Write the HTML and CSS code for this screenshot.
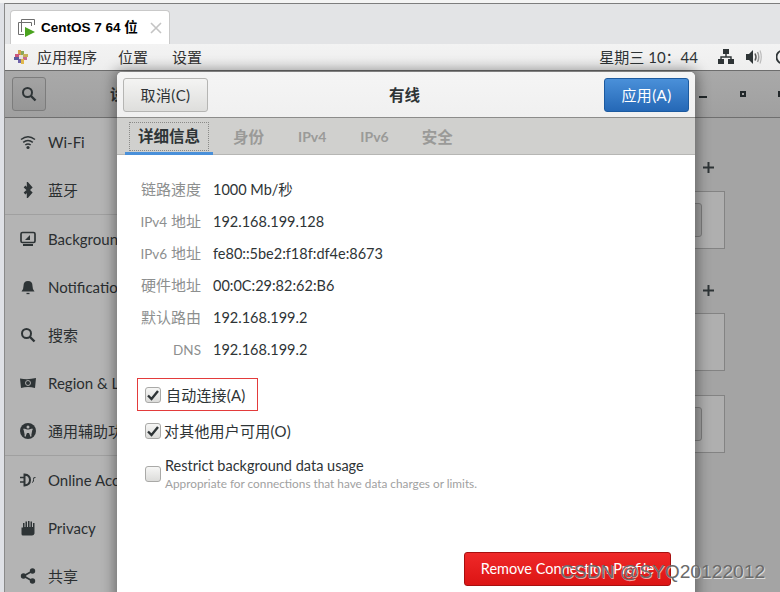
FILE: index.html
```html
<!DOCTYPE html>
<html lang="zh-CN">
<head>
<meta charset="utf-8">
<title>CentOS 7 64 位</title>
<link rel="stylesheet" href="styles.css">
</head>
<body>
<div class="screen">
  <div class="vm-edge"></div>
  <div class="vm">
    <div class="vm-tabs">
      <div class="vm-tab">
        <svg class="vm-logo" width="20" height="20" viewBox="0 0 20 20"><path d="M4.500 .5H17.500V6M4.500 .5V3M1.500 3.500H14.500V7M1.500 3.500V15.500H7M4.500 3V13" fill="none" stroke="#6e6e6e" stroke-width="1"/><path d="M8 8L18 13L8 18Z" fill="#4aa31f"/></svg>
        <span class="vm-tab-title">CentOS 7 64 位</span>
        <svg class="vm-close" width="12" height="12" viewBox="0 0 12 12"><path d="M1 1L11 11M11 1L1 11" stroke="#c4c4c4" stroke-width="1.6"/></svg>
      </div>
    </div>
    <div class="panel">
      <svg class="flower" width="14" height="14" viewBox="0 0 14 14"><rect x="4" y="0" width="3" height="5" fill="#d3a24a"/><rect x="7" y="1" width="3" height="5" fill="#8aa85a"/><rect x="9" y="4" width="5" height="3" fill="#c7b05a"/><rect x="8" y="7" width="5" height="3" fill="#c76a8f"/><rect x="7" y="9" width="3" height="5" fill="#e0b84c"/><rect x="4" y="8" width="3" height="5" fill="#6f62ab"/><rect x="0" y="7" width="5" height="3" fill="#5a5a9c"/><rect x="1" y="4" width="5" height="3" fill="#c9557c"/><rect x="5" y="5" width="4" height="4" fill="#e8e4dc"/></svg>
      <span class="panel-item panel-apps">应用程序</span>
      <span class="panel-item panel-places">位置</span>
      <span class="panel-item panel-settings">设置</span>
      <span class="clock">星期三 10：44</span>
      <svg class="tray-net" width="16" height="16" viewBox="0 0 16 16"><path d="M5 0H11V5H5ZM0 10H6V15H0ZM10 10H16V15H10Z" fill="#2e3436"/><path d="M8 5V8M3 10V8H13V10" fill="none" stroke="#2e3436" stroke-width="1.4"/></svg>
      <svg class="tray-vol" width="16" height="14" viewBox="0 0 16 14"><path d="M0 4H3L7 0V14L3 10H0Z" fill="#2e3436"/><path d="M9 3.500Q11 7 9 10.500" fill="none" stroke="#555" stroke-width="1.500"/><path d="M11.500 2Q14 7 11.500 12" fill="none" stroke="#999" stroke-width="1.500"/><path d="M14 .5Q16.500 7 14 13.500" fill="none" stroke="#bbb" stroke-width="1.200"/></svg>
      <svg class="tray-power" width="4" height="16" viewBox="0 0 4 16"><circle cx="7" cy="8" r="6.500" fill="none" stroke="#2e3436" stroke-width="1.800"/></svg>
    </div>
    <div class="settings">
      <div class="settings-head">
        <div class="side-head">
          <button class="search-btn" type="button"><svg width="16" height="16" viewBox="0 0 16 16"><circle cx="6.500" cy="6.500" r="4.500" fill="none" stroke="#2e3436" stroke-width="2"/><path d="M10 10L14.500 14.500" stroke="#2e3436" stroke-width="2.400"/></svg></button>
          <span class="side-title">设置</span>
        </div>
        <div class="win-ctrls">
          <span class="ctrl-min"></span>
          <span class="ctrl-max"></span>
          <span class="ctrl-close"></span>
        </div>
      </div>
      <div class="settings-body">
        <nav class="sidebar">
          <div class="side-row"><svg class="side-icon" width="16" height="16" viewBox="0 0 16 16"><path d="M1 5.500Q8 0 15 5.500M3.200 8.300Q8 4.500 12.800 8.300M5.300 11Q8 9 10.700 11" fill="none" stroke="#2e3436" stroke-width="1.500"/><circle cx="8" cy="13.500" r="1.600" fill="#2e3436"/></svg><span>Wi-Fi</span></div>
          <div class="side-row side-sep"><svg class="side-icon" width="16" height="16" viewBox="0 0 16 16"><path d="M4.500 4.500L11 10.500L8 14V2L11 5.500L4.500 11.500" fill="none" stroke="#2e3436" stroke-width="2.400"/></svg><span>蓝牙</span></div>
          <div class="side-row"><svg class="side-icon" width="16" height="16" viewBox="0 0 16 16"><rect x="1" y="1.500" width="14" height="10" rx="1.500" fill="none" stroke="#2e3436" stroke-width="1.700"/><path d="M5 9L10 4V9Z" fill="#2e3436"/><path d="M3 14H13" stroke="#2e3436" stroke-width="2"/></svg><span>Background</span></div>
          <div class="side-row"><svg class="side-icon" width="16" height="16" viewBox="0 0 16 16"><path d="M1.500 12.500Q3.500 11 3.500 7Q3.500 2 8 2Q12.500 2 12.500 7Q12.500 11 14.500 12.500Z" fill="#2e3436"/><path d="M6.500 14.500H9.500" stroke="#2e3436" stroke-width="1.300"/></svg><span>Notifications</span></div>
          <div class="side-row"><svg class="side-icon" width="16" height="16" viewBox="0 0 16 16"><circle cx="6.500" cy="6.500" r="4.500" fill="none" stroke="#2e3436" stroke-width="2"/><path d="M10 10L14.500 14.500" stroke="#2e3436" stroke-width="2.400"/></svg><span>搜索</span></div>
          <div class="side-row"><svg class="side-icon" width="16" height="16" viewBox="0 0 16 16"><path d="M0 3.500Q8 5 16 3L15 13Q8 11 1 13Z" fill="#2e3436"/><circle cx="8" cy="8" r="2.500" fill="none" stroke="#aaa"/></svg><span>Region &amp; Language</span></div>
          <div class="side-row side-sep"><svg class="side-icon" width="16" height="16" viewBox="0 0 16 16"><circle cx="8" cy="8" r="8" fill="#2e3436"/><circle cx="8" cy="4" r="1.500" fill="#b4b4b4"/><path d="M3.500 6L6.500 7V9.500L5 13.500M12.500 6L9.500 7V9.500L11 13.500M6.500 7H9.500V9.500H6.500Z" fill="#b4b4b4" stroke="#b4b4b4" stroke-width="1.200"/></svg><span>通用辅助功能</span></div>
          <div class="side-row"><svg class="side-icon" width="16" height="16" viewBox="0 0 16 16"><path d="M0 5.500H4M0 10H4" stroke="#2e3436" stroke-width="1.500"/><path d="M4.500 2.500Q10 3 10 8Q10 13 4.500 13.500Z" fill="none" stroke="#2e3436" stroke-width="2"/><path d="M15.500 5.500Q13 5 13.500 7.500T12 10.500" fill="none" stroke="#2e3436"/></svg><span>Online Accounts</span></div>
          <div class="side-row"><svg class="side-icon" width="16" height="16" viewBox="0 0 16 16"><path d="M1.500 7.500V14Q1.500 15.500 3 15.500H12Q14 15.500 14.500 13.500V3H13V7H12V1.500H10.500V7H9.500V1H8V7H7V1.500H5.500V7H4.500V3H3V7.500Z" fill="#2e3436"/></svg><span>Privacy</span></div>
          <div class="side-row"><svg class="side-icon" width="16" height="16" viewBox="0 0 16 16"><path d="M12.500 3L3.500 8L12.500 13" fill="none" stroke="#2e3436" stroke-width="1.700"/><circle cx="12.500" cy="3" r="2.700" fill="#2e3436"/><circle cx="3.500" cy="8" r="2.700" fill="#2e3436"/><circle cx="12.500" cy="13" r="2.700" fill="#2e3436"/></svg><span>共享</span></div>
        </nav>
        <main class="pane">
          <div class="pane-inner">
            <div class="plus-row"><svg width="11" height="11" viewBox="0 0 11 11"><path d="M0 5.500H11M5.500 0V11" stroke="#2e3436" stroke-width="2"/></svg></div>
            <div class="net-frame"><span class="net-btn"></span></div>
            <div class="plus-row plus-second"><svg width="11" height="11" viewBox="0 0 11 11"><path d="M0 5.500H11M5.500 0V11" stroke="#2e3436" stroke-width="2"/></svg></div>
            <div class="net-frame"></div>
            <div class="net-frame net-third"><span class="net-btn"></span></div>
          </div>
        </main>
      </div>
    </div>
  </div>

  <section class="dialog">
    <header class="dlg-head">
      <button class="btn btn-cancel" type="button">取消(C)</button>
      <h1 class="dlg-title">有线</h1>
      <button class="btn btn-apply" type="button">应用(A)</button>
    </header>
    <div class="dlg-tabs">
      <div class="dlg-tab dlg-tab-active"><span class="dlg-focus">详细信息</span></div>
      <div class="dlg-tab dlg-tab-id">身份</div>
      <div class="dlg-tab dlg-tab-v4">IPv4</div>
      <div class="dlg-tab dlg-tab-v6">IPv6</div>
      <div class="dlg-tab dlg-tab-sec">安全</div>
    </div>
    <div class="dlg-body">
      <dl class="info">
        <dt>链路速度</dt><dd>1000 Mb/秒</dd>
        <dt><span class="lat">IPv4</span> 地址</dt><dd>192.168.199.128</dd>
        <dt><span class="lat">IPv6</span> 地址</dt><dd>fe80::5be2:f18f:df4e:8673</dd>
        <dt>硬件地址</dt><dd>00:0C:29:82:62:B6</dd>
        <dt>默认路由</dt><dd>192.168.199.2</dd>
        <dt><span class="lat">DNS</span></dt><dd>192.168.199.2</dd>
      </dl>
      <div class="auto-box">
        <span class="check check-on"><svg width="12" height="12" viewBox="0 0 12 12"><path d="M1 6.500L4.500 10L11 2" fill="none" stroke="#2e3436" stroke-width="2.400"/></svg></span>
        <span class="opt-label">自动连接(A)</span>
      </div>
      <div class="opt-row">
        <span class="check check-on"><svg width="12" height="12" viewBox="0 0 12 12"><path d="M1 6.500L4.500 10L11 2" fill="none" stroke="#2e3436" stroke-width="2.400"/></svg></span>
        <span class="opt-label opt-tight">对其他用户可用(O)</span>
      </div>
      <div class="opt-row opt-restrict">
        <span class="check"></span>
        <div class="opt-stack">
          <span class="opt-label">Restrict background data usage</span>
          <span class="opt-hint">Appropriate for connections that have data charges or limits.</span>
        </div>
      </div>
      <div class="dlg-foot">
        <button class="btn-remove" type="button">Remove Connection Profile</button>
      </div>
    </div>
  </section>

  <div class="watermark">CSDN @SYQ20122012</div>
</div>
</body>
</html>
```
FILE: styles.css
```css
* { box-sizing: border-box; }
html, body { margin: 0; padding: 0; background: #fff; }
body { font-family: Lato, "Noto Sans CJK SC", sans-serif; font-size: 15px; line-height: 18px; color: #2e3436; }
button { font: inherit; margin: 0; cursor: default; }

.screen { position: relative; width: 780px; height: 592px; overflow: hidden; display: flex; padding-top: 3px; background: #f4f4f4; }
.vm-edge { width: 5px; flex: none; background: #dfe1e6; border-right: 1px solid #8a8a8a; }
.vm { flex: 1; display: flex; flex-direction: column; min-width: 0; border-top: 1px solid #7d7d7d; }

.vm-tabs { height: 40px; flex: none; background: #e3e4e6; padding: 6px 0 0 5px; display: flex; }
.vm-tab { width: 160px; height: 34px; background: #fff; border: 1px solid #c9c9c9; border-bottom: 0; border-radius: 4px 4px 0 0; display: flex; align-items: center; padding-left: 6px; }
.vm-logo { flex: none; margin-right: 4px; margin-top: 3px; }
.vm-tab-title { font-weight: 700; font-size: 13.500px; color: #000; font-family: "Liberation Sans", "Noto Sans CJK SC", sans-serif; white-space: nowrap; }
.vm-close { margin-left: 12px; flex: none; }

.panel { height: 27px; flex: none; background: linear-gradient(#f3f3f3, #eeeeee); border-bottom: 1px solid #6d6d6d; display: flex; align-items: center; padding-left: 9px; }
.flower { flex: none; margin-right: 9px; }
.panel-item { color: #333; }
.panel-places { margin-left: 21px; }
.panel-settings { margin-left: 24px; }
.clock { margin-left: auto; color: #2e3436; }
.tray-net { margin-left: 20px; flex: none; }
.tray-vol { margin-left: 12px; flex: none; }
.tray-power { margin-left: 14px; flex: none; }

.settings { flex: 1; display: flex; flex-direction: column; background: #a4a4a4; min-height: 0; }
.settings-head { height: 47px; flex: none; display: flex; align-items: center; justify-content: space-between; background: linear-gradient(#a9a9a9, #a0a0a0); border-bottom: 1px solid #6f6f6f; }
.side-head { display: flex; align-items: center; }
.search-btn { width: 34px; height: 34px; margin-left: 7px; background: linear-gradient(#a3a3a3, #969696); border: 1px solid #7c7c7c; border-radius: 3px; display: flex; align-items: center; justify-content: center; padding: 0; }
.side-title { margin-left: 64px; font-weight: 700; white-space: nowrap; color: #2e3436; }
.win-ctrls { display: flex; align-items: center; }
.ctrl-min { width: 8px; height: 2px; background: #22282a; margin-top: 6px; }
.ctrl-max { width: 6px; height: 6px; border: 2px solid #22282a; margin-left: 33px; }
.ctrl-close { width: 2px; height: 6px; background: #22282a; margin-left: 32px; }

.settings-body { flex: 1; display: flex; min-height: 0; }
.sidebar { width: 192px; flex: none; background: #b4b4b4; border-right: 1px solid #777; }
.side-row { height: 48px; display: flex; align-items: center; padding-left: 15px; white-space: nowrap; color: #2a2e30; }
.side-sep { border-bottom: 1px solid #a0a0a0; height: 49px; }
.side-icon { flex: none; margin-right: 12px; }

.pane { flex: 1; min-width: 0; overflow: hidden; }
.pane-inner { width: 533px; padding: 0 5px 0 28px; }
.plus-row { height: 73px; display: flex; justify-content: flex-end; padding-top: 44px; }
.plus-second { height: 64px; padding-top: 36px; }
.plus-row svg { margin-right: 11px; }
.net-frame { height: 58px; border: 1px solid #838383; background: #afafaf; display: flex; align-items: center; justify-content: flex-end; padding-right: 22px; }
.net-third { margin-top: 24px; }
.net-btn { width: 40px; height: 34px; border: 1px solid #7e7e7e; border-radius: 3px; background: #a1a1a1; }

.dialog { position: absolute; left: 117px; top: 72px; width: 578px; height: 530px; background: #fff; border-radius: 5px 5px 0 0; box-shadow: 0 0 14px 2px rgba(0,0,0,.42); display: flex; flex-direction: column; }
.dlg-head { height: 46px; flex: none; background: linear-gradient(#f5f5f5, #f0f0f0); border-bottom: 1px solid #8c8c8a; border-radius: 5px 5px 0 0; display: flex; align-items: center; justify-content: space-between; padding: 0 6px; position: relative; }
.dlg-title { position: absolute; left: 0; right: 3px; text-align: center; margin: 0; font-size: 15.500px; font-weight: 700; color: #2e3436; pointer-events: none; }
.btn { height: 34px; border-radius: 3px; padding: 0; width: 85px; position: relative; z-index: 1; letter-spacing: .4px; }
.btn-cancel { background: linear-gradient(#f4f4f3, #dededc); border: 1px solid #b5b5b3; color: #2e3436; }
.btn-apply { background: linear-gradient(#4a90d9, #2568b6); border: 1px solid #1c5a9f; color: #fff; }

.dlg-tabs { height: 37px; flex: none; background: #d0d0ce; border-bottom: 1px solid #b6b6b4; display: flex; padding-left: 8px; font-weight: 700; font-size: 15.500px; color: #9a9a98; }
.dlg-tab { display: flex; align-items: center; height: 37px; }
.dlg-tab-active { width: 88px; justify-content: center; border-bottom: 3px solid #4a90d9; color: #2e3436; padding-top: 2px; }
.dlg-focus { border: 1px dotted #8a8a88; width: 80px; height: 29px; line-height: 27px; text-align: center; white-space: nowrap; }
.dlg-tab-id { margin-left: 20px; }
.dlg-tab-v4 { margin-left: 34px; font-size: 14px; }
.dlg-tab-v6 { margin-left: 34px; font-size: 14px; }
.dlg-tab-sec { margin-left: 33px; }

.dlg-body { flex: 1; min-height: 0; display: flex; flex-direction: column; padding: 18px 24px 6px 20px; }
.info { display: grid; grid-template-columns: 64px 1fr; grid-auto-rows: 32px; align-items: center; column-gap: 12px; margin: 0; }
.info dt { text-align: right; color: #8d8f8f; white-space: nowrap; }
.info .lat { font-size: 13.500px; }
.info dd { margin: 0; padding-top: 2px; color: #2e3436; white-space: nowrap; font-size: 14.500px; }

.auto-box { width: 121px; height: 33px; border: 1px solid #e33b3b; margin-top: 13px; display: flex; align-items: center; padding-left: 7px; }
.opt-row { display: flex; align-items: center; margin-top: 11px; padding-left: 8px; }
.opt-restrict { margin-top: 17px; align-items: flex-start; }
.opt-restrict .check { margin-top: 9px; }
.check { width: 16px; height: 16px; flex: none; border: 1px solid #a9a9a7; border-radius: 3px; background: linear-gradient(#f6f6f5, #dcdcda); display: flex; align-items: center; justify-content: center; }
.opt-label { color: #2e3436; margin-left: 5px; white-space: nowrap; letter-spacing: .2px; }
.opt-tight { margin-left: 3px; }
.opt-stack { display: flex; flex-direction: column; }
.opt-stack .opt-label { margin-left: 4px; letter-spacing: 0; font-size: 14.500px; }
.opt-hint { font-size: 11.800px; color: #9fa1a1; margin-left: 4px; white-space: nowrap; }

.dlg-foot { margin-top: auto; display: flex; justify-content: flex-end; }
.btn-remove { width: 207px; height: 34px; background: linear-gradient(#ef2929, #dc1414); border: 1px solid #a80f0f; border-radius: 3px; color: #fff; padding: 0; margin-bottom: 10px; font-size: 14.500px; }

.watermark { position: absolute; left: 560px; top: 559px; font-family: "Liberation Sans", sans-serif; font-size: 19.200px; line-height: 26px; color: #6b6b6b; text-shadow: 1px 1px 0 rgba(255,255,255,.6); white-space: nowrap; }
```
